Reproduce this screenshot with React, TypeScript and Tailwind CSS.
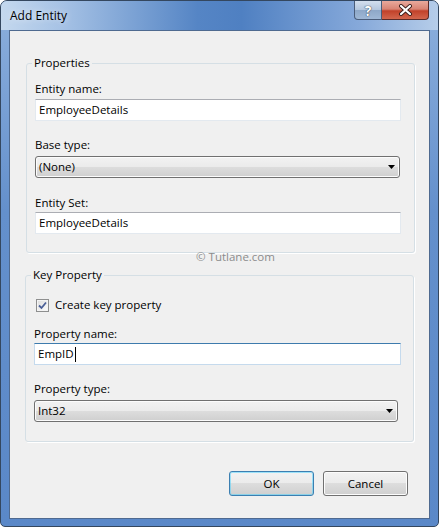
import React from 'react'

const font = "font-['Segoe_UI','Open_Sans',sans-serif]"

const TextBox = ({ value, width, focused }: { value: string; width: string; focused?: boolean }) => (
  <div
    className={`${width} h-[22px] bg-white border flex items-center pl-[3px] text-[11.5px] text-black ${
      focused
        ? 'border-[#c5daed] border-t-[#3d7bad]'
        : 'border-[#e3e9ef] border-t-[#abadb3]'
    }`}
  >
    <span>{value}</span>
    {focused && <span className="ml-[1px] w-[1px] h-[15px] bg-black" />}
  </div>
)

const Combo = ({ value, width }: { value: string; width: string }) => (
  <div
    className={`${width} h-[22px] rounded-[3px] border border-[#707070] bg-[linear-gradient(#f2f2f2_0%,#ebebeb_48%,#dddddd_50%,#cfcfcf_100%)] shadow-[inset_0_0_0_1px_#fcfcfc] flex items-center justify-between pl-[3px] pr-[4px] text-[11.5px] text-black`}
  >
    <span>{value}</span>
    <svg width="7" height="4" viewBox="0 0 7 4">
      <path d="M0 0H7L3.5 4Z" fill="#000" />
    </svg>
  </div>
)

const Label = ({ text, className = '' }: { text: string; className?: string }) => (
  <div className={`h-[16px] leading-[16px] text-[11.5px] text-black ${className}`}>{text}</div>
)

const Button = ({ text, isDefault }: { text: string; isDefault?: boolean }) => (
  <button
    className={`w-[85px] h-[25px] rounded-[3px] border text-[11.5px] text-black bg-[linear-gradient(#f2f2f2_0%,#ebebeb_48%,#dddddd_50%,#cfcfcf_100%)] ${
      isDefault
        ? 'border-[#3c7fb1] shadow-[inset_0_0_0_1px_#48d1ff80]'
        : 'border-[#707070] shadow-[inset_0_0_0_1px_#fcfcfc]'
    }`}
  >
    {text}
  </button>
)

export default function App() {
  return (
    <div className={`${font} w-[439px] h-[527px] bg-white`}>
      <div className="w-[439px] h-[527px] rounded-t-[7px] rounded-b-[5px] border border-[#34475f] bg-[linear-gradient(#8db0dd,#6490cc_40%,#5a88c8)] overflow-hidden flex flex-col">
        {/* title bar */}
        <div className="h-[29px] shrink-0 flex items-start bg-[linear-gradient(90deg,#c4d8ee_0%,#a6c2e5_14%,#5585c5_45%,#4f80c2_55%,#86a9da_82%,#b6cde9_100%)]">
          <span className="ml-[9px] mt-[7px] text-[12px] leading-[16px] text-black [text-shadow:0_0_6px_#ffffffcc]">
            Add Entity
          </span>
          <div className="ml-auto mr-[9px] flex">
            <div className="w-[28px] h-[19px] rounded-bl-[4px] border border-t-0 border-[#4a5d7a] bg-[linear-gradient(#d3dfee_0%,#b4c7de_48%,#8ea8c8_52%,#9fb8d6_100%)] flex items-center justify-center text-[14px] font-bold text-white [text-shadow:0_0_1px_#2b3a4f,0_0_1px_#2b3a4f]">
              ?
            </div>
            <div className="w-[47px] h-[19px] rounded-br-[4px] border border-t-0 border-l-0 border-[#5a2a28] bg-[linear-gradient(#e9a99c_0%,#d88474_45%,#c2412a_55%,#d3664d_100%)] flex items-center justify-center">
              <svg width="15" height="12" viewBox="0 0 15 12">
                <path d="M3 2L12 10M12 2L3 10" stroke="#3b1f1c" strokeWidth="4" strokeLinecap="round" />
                <path d="M3 2L12 10M12 2L3 10" stroke="#fff" strokeWidth="2.2" strokeLinecap="round" />
              </svg>
            </div>
          </div>
        </div>

        {/* client area */}
        <div className="mx-[8px] h-[489px] border border-[#4f6a90] bg-[#f0f0f0] flex flex-col">
          <fieldset className="ml-[16px] mr-[14px] mt-[24px] border border-[#d5dfe5] rounded-[3px] pl-[8px] pb-[18px] shadow-[1px_1px_0_#ffffff]">
            <legend className="-ml-[3px] px-[2px] h-[16px] leading-[16px] text-[11.5px] text-black">Properties</legend>
            <Label text="Entity name:" className="mt-[10px]" />
            <div className="mt-[2px]">
              <TextBox value="EmployeeDetails" width="w-[366px]" />
            </div>
            <Label text="Base type:" className="mt-[16px]" />
            <div className="mt-[3px]">
              <Combo value="(None)" width="w-[365px]" />
            </div>
            <Label text="Entity Set:" className="mt-[17px]" />
            <div className="mt-[1px]">
              <TextBox value="EmployeeDetails" width="w-[366px]" />
            </div>
          </fieldset>

          <div className="-mt-[4px] h-[16px] leading-[16px] text-[11.5px] text-[#8c8c8c] pl-[186px]">© Tutlane.com</div>

          <fieldset className="ml-[15px] mr-[15px] mt-[2px] border border-[#d5dfe5] rounded-[3px] pl-[8px] pb-[19px] shadow-[1px_1px_0_#ffffff]">
            <legend className="-ml-[3px] px-[2px] h-[16px] leading-[16px] text-[11.5px] text-black">Key Property</legend>
            <div className="mt-[14px] h-[16px] flex items-center">
              <div className="ml-[2px] w-[13px] h-[13px] border border-[#8e8f8f] bg-[linear-gradient(135deg,#dcdcdc,#fdfdfd)] shadow-[inset_0_0_0_1px_#f4f4f4] flex items-center justify-center">
                <svg width="9" height="9" viewBox="0 0 9 9">
                  <path d="M1 4.5L3.5 7L8 1.5" stroke="#4a5f97" strokeWidth="1.8" fill="none" />
                </svg>
              </div>
              <span className="ml-[6px] text-[11.5px] leading-[16px] text-black">Create key property</span>
            </div>
            <Label text="Property name:" className="mt-[13px]" />
            <div className="mt-[1px]">
              <TextBox value="EmpID" width="w-[367px]" focused />
            </div>
            <Label text="Property type:" className="mt-[16px]" />
            <div className="mt-[3px]">
              <Combo value="Int32" width="w-[364px]" />
            </div>
          </fieldset>

          <div className="mt-[29px] mr-[21px] flex justify-end gap-[9px]">
            <Button text="OK" isDefault />
            <Button text="Cancel" />
          </div>
        </div>
      </div>
    </div>
  )
}
